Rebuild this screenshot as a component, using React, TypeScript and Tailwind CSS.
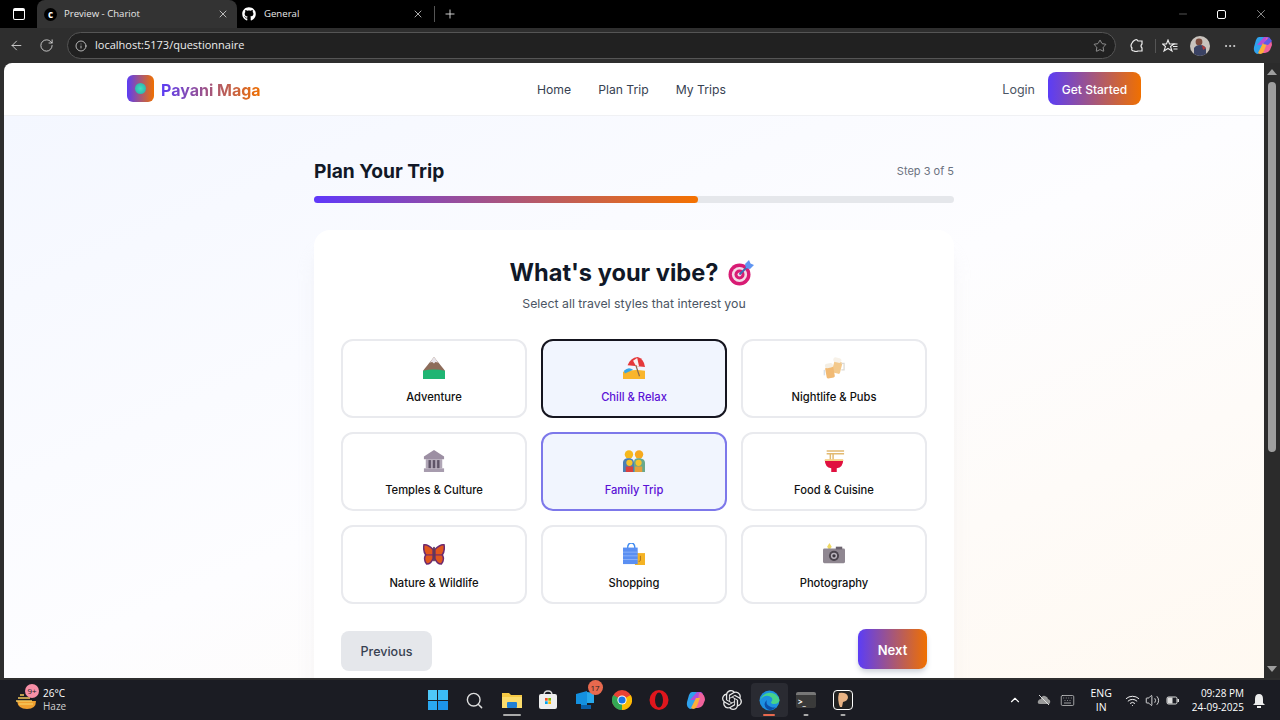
import { ArrowLeft, RotateCw, Info, Star, X, Plus, Minus, ChevronUp, Wifi, Volume2, Keyboard, Search, Ellipsis } from 'lucide-react';
import { FaGithub } from 'react-icons/fa';
import { SiOpenai } from 'react-icons/si';
import type { ReactNode } from 'react';

const Emoji = ({ children, size = 22 }: { children: ReactNode; size?: number }) => (
  <svg width={size} height={size} viewBox="0 0 24 24">{children}</svg>
);

const Mountain = () => (
  <Emoji>
    <path d="M12 0 L24 15 V18 H0 V15 Z" fill="#8d6c5a" />
    <path d="M12 0 L16.5 6 L13.5 5.5 L12 7 L10 5.5 L7.5 6 Z" fill="#e8e4ea" />
    <path d="M0 15 Q12 12 24 15 V24 H0 Z" fill="#1fb573" />
  </Emoji>
);

const Umbrella = () => (
  <Emoji>
    <path d="M0 16 Q12 13 24 15 V24 H0 Z" fill="#f9b52c" />
    <path d="M1 15 Q6 10 11 14 L2 18 Z" fill="#37a7e8" />
    <path d="M5 9 Q8 1 16 0 Q23 2 24 11 Z" fill="#e5383b" />
    <path d="M11 4 L14 9.5 L17.5 10 L15.5 1 Z" fill="#f7f2f2" />
    <path d="M14 9 L18 21" stroke="#8a6a4d" strokeWidth="1.3" />
  </Emoji>
);

const Beers = () => (
  <Emoji>
    <g opacity="0.85">
      <rect x="11" y="5" width="9" height="13" rx="1.5" fill="#f2c078" transform="rotate(14 16 11)" />
      <rect x="11" y="1" width="9" height="5" rx="2.5" fill="#f6efe4" transform="rotate(14 16 4)" />
      <path d="M20 7 h3 v7 h-3" fill="none" stroke="#d8d4cc" strokeWidth="1.4" />
      <rect x="3" y="11" width="9" height="12" rx="1.5" fill="#efae5c" transform="rotate(-10 7 16)" />
      <rect x="2" y="7" width="9" height="5" rx="2.5" fill="#f3ecdf" transform="rotate(-10 6 10)" />
      <path d="M1.5 14 v6" stroke="#cfdbe6" strokeWidth="1.6" />
    </g>
  </Emoji>
);

const Temple = () => (
  <Emoji>
    <path d="M12 0 L23 7 V10 H1 V7 Z" fill="#9c8fa3" />
    <rect x="3" y="10" width="18" height="10" fill="#b0a6b6" />
    <rect x="6" y="11" width="2.6" height="9" fill="#5f5468" />
    <rect x="10.7" y="11" width="2.6" height="9" fill="#5f5468" />
    <rect x="15.4" y="11" width="2.6" height="9" fill="#5f5468" />
    <rect x="1" y="20" width="22" height="4" fill="#a79cae" />
  </Emoji>
);

const Family = () => (
  <Emoji>
    <circle cx="6.5" cy="5" r="4.6" fill="#f6b91e" />
    <circle cx="17.5" cy="5" r="4.6" fill="#f6a91e" />
    <path d="M0 24 V13 Q1 9 5 9 H8 Q12 10 12 14 V24 Z" fill="#4a7fb5" />
    <path d="M12 24 V13 Q12 9 16 9 H19 Q24 10 24 14 V24 Z" fill="#6aa98c" />
    <circle cx="7" cy="14" r="3.4" fill="#f6c32c" />
    <circle cx="17" cy="14" r="3.4" fill="#f6c32c" />
    <rect x="3" y="18" width="8" height="6" fill="#d94040" />
    <rect x="13" y="18" width="8" height="6" fill="#e5a03c" />
  </Emoji>
);

const Noodles = () => (
  <Emoji>
    <path d="M4 1 H23 M4 4 H23 M8 5 V12 M11 5 V12" stroke="#e2b971" strokeWidth="1.6" fill="none" />
    <path d="M2 11 H22 Q22 19 15 20 V24 H9 V20 Q2 19 2 11 Z" fill="#e0103f" />
    <rect x="2" y="10" width="20" height="2" fill="#f5cf86" />
  </Emoji>
);

const Butterfly = () => (
  <Emoji>
    <path d="M11 7 Q5 1 1 2 Q0 9 3 13 Q0 18 4 23 Q9 23 11 17 Z" fill="#e2571e" stroke="#6b2a6f" strokeWidth="1.6" />
    <path d="M13 7 Q19 1 23 2 Q24 9 21 13 Q24 18 20 23 Q15 23 13 17 Z" fill="#e2571e" stroke="#6b2a6f" strokeWidth="1.6" />
    <path d="M2 13 H22" stroke="#6b2a6f" strokeWidth="1.2" />
    <rect x="11" y="4" width="2" height="16" rx="1" fill="#5c3a55" />
  </Emoji>
);

const Bags = () => (
  <Emoji>
    <path d="M5 6 Q5 0 9 0 Q13 0 13 6" fill="none" stroke="#3f8bf0" strokeWidth="1.6" />
    <rect x="13" y="11" width="11" height="13" fill="#f5b324" />
    <path d="M19 14 V19 Q19 20 17 20" stroke="#a9701d" strokeWidth="1" fill="none" />
    <rect x="0" y="5" width="16" height="18" fill="#5a8ff2" />
    <path d="M0 10 H16 M0 14 H16 M0 18 H16" stroke="#8cb2f7" strokeWidth="1" />
  </Emoji>
);

const Camera = () => (
  <Emoji>
    <path d="M7 0 L9.5 4 L7 8 L4.5 4 Z" fill="#efd964" />
    <rect x="0" y="6" width="24" height="16" rx="1.5" fill="#8f8791" />
    <rect x="14" y="4" width="7" height="3" fill="#6c646f" />
    <circle cx="12" cy="14" r="5.5" fill="#4a444d" />
    <circle cx="12" cy="14" r="3.4" fill="#b9b3bc" />
    <circle cx="12" cy="14" r="1.8" fill="#3a353d" />
  </Emoji>
);

const Target = () => (
  <svg className="mr-[4px]" width="26" height="26" viewBox="0 0 26 26">
    <circle cx="11.5" cy="14.5" r="11" fill="#d81b74" />
    <circle cx="11.5" cy="14.5" r="7.6" fill="#f4dbe7" />
    <circle cx="11.5" cy="14.5" r="5" fill="#d81b74" />
    <circle cx="11.5" cy="14.5" r="2" fill="#f4dbe7" />
    <path d="M11.5 14.5 L21 5" stroke="#3f6ab0" strokeWidth="2" />
    <path d="M17 4 L21 0 L22.5 3.5 L26 5 L22 9 L18 8 Z" fill="#5f95f2" />
  </svg>
);

const vibes = [
  { label: 'Adventure', icon: <Mountain />, state: 'none' },
  { label: 'Chill & Relax', icon: <Umbrella />, state: 'focus' },
  { label: 'Nightlife & Pubs', icon: <Beers />, state: 'none' },
  { label: 'Temples & Culture', icon: <Temple />, state: 'none' },
  { label: 'Family Trip', icon: <Family />, state: 'selected' },
  { label: 'Food & Cuisine', icon: <Noodles />, state: 'none' },
  { label: 'Nature & Wildlife', icon: <Butterfly />, state: 'none' },
  { label: 'Shopping', icon: <Bags />, state: 'none' },
  { label: 'Photography', icon: <Camera />, state: 'none' },
];

const VibeCard = ({ label, icon, state }: { label: string; icon: ReactNode; state: string }) => {
  let look = 'border-2 border-[#e9eaee] bg-white text-[#111111]';
  if (state === 'focus') look = 'border-2 border-[#15151f] bg-[#f1f5fe] text-[#5b12d6]';
  if (state === 'selected') look = 'border-2 border-[#7d78ea] bg-[#f1f5fe] text-[#5b12d6]';
  return (
    <div className={`h-[79px] rounded-xl flex flex-col items-center pt-[16px] ${look}`}>
      <div className="h-[22px] flex items-center justify-center">{icon}</div>
      <div className="mt-[9px] text-[11.2px] leading-[18px] font-medium">{label}</div>
    </div>
  );
};

const TaskIcon = ({ children, active, dot }: { children: ReactNode; active?: boolean; dot?: string }) => (
  <div className={`relative w-[36.8px] h-[34px] rounded flex items-center justify-center ${active ? 'bg-[#2a2b32]' : ''}`}>
    {children}
    {dot && <div className={`absolute bottom-[1px] left-1/2 -translate-x-1/2 h-[2px] rounded ${dot}`} />}
  </div>
);

const TabStrip = () => (
  <div className="h-[28px] flex items-end bg-black text-[#e8e8e8] text-[9.6px]">
    <div className="w-[37px] h-[28px] flex items-center justify-center">
      <div className="w-[12px] h-[12px] rounded-[2px] border border-white border-t-[3px]" />
    </div>
    <div className="w-[200px] h-[28px] bg-[#333333] rounded-t-lg flex items-center pl-[7px] pr-[8px]">
      <div className="w-[13px] h-[13px] rounded-full bg-black flex items-center justify-center text-white text-[10px] font-bold leading-none">c</div>
      <span className="ml-[7px] flex-1">Preview - Chariot</span>
      <X size={12} strokeWidth={1.5} />
    </div>
    <div className="w-[192px] h-[28px] flex items-center pl-[5px] pr-[5px]">
      <FaGithub size={14} className="text-white" />
      <span className="ml-[8px] flex-1">General</span>
      <X size={12} strokeWidth={1.5} />
    </div>
    <div className="h-[16px] w-px bg-[#555555] mb-[6px] ml-[5px]" />
    <div className="h-[28px] ml-[8px] flex items-center">
      <Plus size={14} strokeWidth={1.5} />
    </div>
    <div className="flex-1 h-[28px] flex items-center justify-end gap-[28px] pr-[12px]">
      <Minus size={12} strokeWidth={1} className="text-[#aaaaaa]" />
      <div className="w-[9px] h-[9px] border border-white rounded-[2px]" />
      <X size={14} strokeWidth={1} />
    </div>
  </div>
);

const Toolbar = () => (
  <div className="h-[35px] bg-[#2e2e2e] flex items-center text-[#e6e6e6]">
    <div className="w-[67px] pl-[9px] flex items-center gap-[15px] shrink-0">
      <ArrowLeft size={15} strokeWidth={1.3} />
      <RotateCw size={15} strokeWidth={1.3} />
    </div>
    <div className="w-[1049px] h-[27px] rounded-full bg-[#212121] border border-[#555555] flex items-center pl-[7px] pr-[8px] text-[11px]">
      <Info size={12} strokeWidth={1.5} />
      <span className="ml-[8px] flex-1 text-[#ededed]">localhost:5173/questionnaire</span>
      <Star size={14} strokeWidth={1.2} className="text-[#bbbbbb]" />
    </div>
    <div className="flex-1 flex items-center pl-[14px]">
      <svg width="14" height="14" viewBox="0 0 14 14" fill="none" stroke="#eeeeee" strokeWidth="1.2">
        <path d="M5 1 Q7 0 8 2 L12 2 L12 5 Q10 7 12 9 L12 12 L8 12 Q6 13 4 12 Q1 12 2 9 Q0 7 2 4 Q3 2 5 1 Z" />
      </svg>
      <div className="w-px h-[14px] bg-[#555555] ml-[11px]" />
      <svg className="ml-[6px]" width="16" height="14" viewBox="0 0 16 14" fill="none" stroke="#eeeeee" strokeWidth="1.1">
        <path d="M6 1 L7.5 5 H12 L8.5 7.5 L10 12 L6 9.5 L2 12 L3.5 7.5 L0.5 5 H4.5 Z" />
        <path d="M11 7.5 H15.5 M11.5 10 H15.5 M10.5 5 H15.5" />
      </svg>
      <div className="ml-[12px] w-[20px] h-[20px] rounded-full bg-[#c9c3bd] overflow-hidden flex justify-center items-end">
        <svg width="14" height="19" viewBox="0 0 14 19">
          <circle cx="6" cy="5" r="3.4" fill="#7a4a3c" />
          <path d="M1 19 V11 Q3 8 7 8 Q12 8 13 12 V19 Z" fill="#3a4263" />
          <path d="M9 8 L13 11 L10 13 Z" fill="#b23a3a" />
        </svg>
      </div>
      <Ellipsis size={14} strokeWidth={1.5} className="ml-[13px]" />
      <svg className="ml-[16px]" width="20" height="19" viewBox="0 0 20 19">
        <path d="M6 1 H11 L8 16 Q7 18 4 18 Q0 16 1 11 L3 4 Q4 1 6 1 Z" fill="#2fa2ee" />
        <path d="M4 9 L11 1 H15 Q18 3 17 6 L14 9 Z" fill="#b14fd8" />
        <path d="M13 2 H15 Q19 4 19 9 L17 14 Q15 17 12 17 H8 L12 9 Z" fill="#f0629c" />
        <path d="M5 17 L10 7 L14 7 L11 15 Q10 18 7 18 Z" fill="#fbb03a" />
        <path d="M10 8 L16 1 L19 5 L15 9 Z" fill="#5d5be6" />
      </svg>
    </div>
  </div>
);

const Navbar = () => (
  <div className="h-[53px] shrink-0 bg-white border-b border-[#f0f1f4] flex justify-center" >
    <div className="w-[1014px] flex items-center">
      <div className="w-[27px] h-[27px] rounded-md bg-linear-to-r/srgb from-[#5b3df6] to-[#f07000] flex items-center justify-center mb-[1px]">
        <div className="w-[11px] h-[11px] rounded-full bg-[radial-gradient(circle,#3fe0c0,#2aa6a8)]" />
      </div>
      <div className="ml-[7px] w-[376px] text-[16px] font-bold pt-[2px]">
        <span className="bg-linear-to-r/srgb from-[#5b3df6] to-[#f07000] bg-clip-text text-transparent">Payani Maga</span>
      </div>
      <div className="flex items-center gap-[27px] text-[12.2px] text-[#374151] pt-[2px]">
        <span>Home</span>
        <span>Plan Trip</span>
        <span>My Trips</span>
      </div>
      <div className="flex-1 flex items-center justify-end text-[12.5px]">
        <span className="text-[#4b5563] pt-[2px]">Login</span>
        <div className="ml-[13px] mb-[2px] pt-[3px] w-[93px] h-[33px] rounded-lg bg-linear-to-r/srgb from-[#5b3df6] to-[#f07000] text-white font-medium flex items-center justify-center text-[12px]">
          Get Started
        </div>
      </div>
    </div>
  </div>
);

const Page = () => (
  <div className="flex-1 bg-linear-to-br from-[#f4f7ff] via-[#fdfdff] to-[#fff9f1] flex flex-col items-center overflow-hidden">
    <div className="w-[640px] shrink-0">
      <div className="mt-[41px] h-[28px] flex items-center justify-between">
        <h2 className="text-[19.2px] font-bold text-[#111827]">Plan Your Trip</h2>
        <span className="text-[11px] text-[#6b7280]">Step 3 of 5</span>
      </div>
      <div className="mt-[11px] h-[7px] rounded-full bg-[#e5e7eb]">
        <div className="h-[7px] w-[60%] rounded-full bg-linear-to-r/srgb from-[#5f38fb] to-[#f57200]" />
      </div>
      <div className="mt-[27px] h-[560px] bg-white rounded-2xl shadow-xl shadow-gray-200/40 px-[27px]">
        <div className="pt-[26px] flex justify-center items-center gap-[10px] h-[60px]">
          <h1 className="text-[23.6px] font-bold text-[#111827]">What's your vibe?</h1>
          <Target />
        </div>
        <p className="mt-[4px] text-center text-[12.3px] leading-[20px] text-[#4b5563]">Select all travel styles that interest you</p>
        <div className="mt-[25px] grid grid-cols-3 gap-x-[14px] gap-y-[14px]">
          {vibes.map((v) => <VibeCard key={v.label} {...v} />)}
        </div>
        <div className="mt-[25px] flex justify-between items-start">
          <div className="mt-[2px] pt-[2px] w-[91px] h-[40px] rounded-lg bg-[#e5e7eb] text-[#374151] text-[12.5px] font-medium flex items-center justify-center">Previous</div>
          <div className="pt-[3px] w-[69px] h-[40px] rounded-lg bg-linear-to-r/srgb from-[#5b3df6] to-[#f07000] text-white text-[13px] font-semibold flex items-center justify-center shadow-md shadow-gray-300">Next</div>
        </div>
      </div>
    </div>
  </div>
);

const Scrollbar = () => (
  <div className="w-[16px] shrink-0 bg-[#2b2b2b] flex flex-col items-center pt-[6px]">
    <div className="w-0 h-0 border-x-[5px] border-x-transparent border-b-[6px] border-b-[#9e9e9e]" />
    <div className="mt-[7px] w-[8px] h-[370px] rounded-full bg-[#9e9e9e]" />
    <div className="mt-auto mb-[6px] w-0 h-0 border-x-[5px] border-x-transparent border-t-[6px] border-t-[#9e9e9e]" />
  </div>
);

const Taskbar = () => (
  <div className="h-[40px] bg-[#1b1c23] flex items-center text-white text-[10px]">
    <div className="w-[419.6px] shrink-0 flex items-center pl-[16px]">
      <div className="relative w-[22px] h-[22px]">
        <svg width="22" height="22" viewBox="0 0 22 22">
          <path d="M1 12 H20 Q20 20 11 20 Q2 20 1 12 Z" fill="#f0a030" />
          <path d="M2 9 H14 M0 12 H16 M3 15 H17 M4 6 H8" stroke="#f4c65a" strokeWidth="1.5" />
        </svg>
        <div className="absolute -top-[5px] left-[9px] w-[14px] h-[14px] rounded-full bg-[#f78fa7] text-[#222222] text-[8px] leading-[14px] text-center">9+</div>
      </div>
      <div className="ml-[5px] leading-[13px]">
        <div>26°C</div>
        <div className="text-[#cfcfcf]">Haze</div>
      </div>
    </div>
    <div className="flex items-center">
      <TaskIcon>
        <div className="grid grid-cols-2 gap-[1px] w-[20px] h-[20px]">
          <div className="bg-[#4fc8f8]" />
          <div className="bg-[#3cbcf6]" />
          <div className="bg-[#2aa8f0]" />
          <div className="bg-[#1c94ea]" />
        </div>
      </TaskIcon>
      <TaskIcon><Search size={19} strokeWidth={1.8} className="text-[#dddddd]" /></TaskIcon>
      <TaskIcon dot="w-[18px] bg-[#aaaaaa]">
        <svg width="20" height="20" viewBox="0 0 20 20">
          <path d="M0 3 H7 L9 5 H20 V18 H0 Z" fill="#f6c945" />
          <path d="M0 7 H20 V18 H0 Z" fill="#fbdc6c" />
          <rect x="5" y="12" width="10" height="6" rx="1" fill="#1f7fd4" />
        </svg>
      </TaskIcon>
      <TaskIcon>
        <svg width="20" height="20" viewBox="0 0 20 20">
          <path d="M6 5 Q6 1 10 1 Q14 1 14 5" fill="none" stroke="#dddddd" strokeWidth="1.3" />
          <rect x="1" y="4" width="18" height="15" rx="2" fill="#eeeeee" />
          <rect x="7" y="8" width="2.7" height="2.7" fill="#f05022" />
          <rect x="10.3" y="8" width="2.7" height="2.7" fill="#7fba00" />
          <rect x="7" y="11.3" width="2.7" height="2.7" fill="#00a4ef" />
          <rect x="10.3" y="11.3" width="2.7" height="2.7" fill="#ffb900" />
        </svg>
      </TaskIcon>
      <TaskIcon>
        <svg width="20" height="20" viewBox="0 0 20 20">
          <path d="M1 4 L12 1 V16 H6 V14 H1 Z" fill="#1490df" />
          <path d="M12 2 L19 3 V13 H12 Z" fill="#28a8ea" />
          <rect x="6" y="15" width="10" height="4" fill="#0a5fa8" />
        </svg>
        <div className="absolute top-[-3px] right-[1px] w-[15px] h-[15px] rounded-full bg-[#e8694e] text-[#222222] text-[8px] leading-[15px] text-center">17</div>
      </TaskIcon>
      <TaskIcon>
        <svg width="20" height="20" viewBox="0 0 20 20">
          <circle cx="10" cy="10" r="10" fill="#e94235" />
          <path d="M10 10 L1.3 5 A10 10 0 0 0 10 20 Z" fill="#34a853" />
          <path d="M10 10 L10 20 A10 10 0 0 0 18.7 5 Z" fill="#fbbc04" />
          <circle cx="10" cy="10" r="4.6" fill="#ffffff" />
          <circle cx="10" cy="10" r="3.6" fill="#1a73e8" />
        </svg>
      </TaskIcon>
      <TaskIcon>
        <svg width="20" height="20" viewBox="0 0 20 20">
          <ellipse cx="10" cy="10" rx="9.5" ry="10" fill="#e0161d" />
          <ellipse cx="10" cy="10" rx="4" ry="7.5" fill="#1b1c23" />
        </svg>
      </TaskIcon>
      <TaskIcon>
        <svg width="20" height="19" viewBox="0 0 20 19">
          <path d="M6 1 H11 L8 16 Q7 18 4 18 Q0 16 1 11 L3 4 Q4 1 6 1 Z" fill="#2fa2ee" />
          <path d="M4 9 L11 1 H15 Q18 3 17 6 L14 9 Z" fill="#b14fd8" />
          <path d="M13 2 H15 Q19 4 19 9 L17 14 Q15 17 12 17 H8 L12 9 Z" fill="#f0629c" />
          <path d="M5 17 L10 7 L14 7 L11 15 Q10 18 7 18 Z" fill="#fbb03a" />
        </svg>
      </TaskIcon>
      <TaskIcon><SiOpenai size={20} className="text-[#e8e8e8]" /></TaskIcon>
      <TaskIcon active dot="w-[12px] bg-[#e8694e]">
        <svg width="21" height="21" viewBox="0 0 21 21">
          <circle cx="10.5" cy="10.5" r="10" fill="#1d8fe0" />
          <path d="M1 11 A10 10 0 0 1 20.5 10 Q20 14 15 14 Q12 14 12 12 Q14 11 13 8 Q9 4 4 7 Q2 8 1 11 Z" fill="#46d38b" />
          <path d="M8 19 Q3 14 8 10 Q6 15 12 17 Q15 18 17 17 Q13 22 8 19 Z" fill="#0b4fa8" />
        </svg>
      </TaskIcon>
      <TaskIcon dot="w-[5px] bg-[#aaaaaa]">
        <div className="w-[20px] h-[16px] rounded-[2px] bg-[#3a3a3a] border-t-[3px] border-[#777777] flex items-center pl-[2px] text-[8px] font-bold leading-none">&gt;_</div>
      </TaskIcon>
      <TaskIcon dot="w-[5px] bg-[#aaaaaa]">
        <div className="w-[20px] h-[20px] rounded-[4px] bg-[#222222] border border-white flex items-center justify-center">
          <svg width="12" height="16" viewBox="0 0 12 16">
            <path d="M2 1 Q10 0 11 5 Q11 9 6 10 L5 15 H3 Q0 8 2 1 Z" fill="#e9b384" />
          </svg>
        </div>
      </TaskIcon>
    </div>
    <div className="flex-1 flex items-center justify-end pr-[14px]">
      <ChevronUp size={14} strokeWidth={2} />
      <svg className="ml-[15px]" width="14" height="12" viewBox="0 0 14 12">
        <path d="M3 10 Q0 10 1 7 Q2 5 4 5 Q5 1 8 2 Q11 3 11 5 Q14 6 13 9 Q13 10 11 10 Z" fill="#9a9a9a" />
        <path d="M2 1 L12 11" stroke="#dddddd" strokeWidth="1" />
      </svg>
      <Keyboard size={15} strokeWidth={1.2} className="ml-[9px] text-[#cccccc]" />
      <div className="ml-[15px] text-center text-[10.5px] leading-[14px]"><div>ENG</div><div>IN</div></div>
      <Wifi size={15} strokeWidth={1.5} className="ml-[13px]" />
      <Volume2 size={15} strokeWidth={1.3} className="ml-[5px]" />
      <svg className="ml-[6px]" width="14" height="11" viewBox="0 0 14 11">
        <rect x="1" y="2" width="10" height="7" rx="1.5" fill="none" stroke="#dddddd" strokeWidth="1" />
        <rect x="1.5" y="2.5" width="5" height="6" fill="#dddddd" />
        <rect x="11.5" y="4" width="1.5" height="3" fill="#dddddd" />
      </svg>
      <div className="ml-[12px] text-right text-[10px] leading-[14px]">
        <div>09:28 PM</div>
        <div>24-09-2025</div>
      </div>
      <svg className="ml-[8px]" width="14" height="15" viewBox="0 0 14 15">
        <path d="M7 1 Q11 1 11 6 V10 L13 12 H1 L3 10 V6 Q3 1 7 1 Z" fill="#ececec" />
        <rect x="5" y="13" width="4" height="2" fill="#ececec" />
      </svg>
    </div>
  </div>
);

const App = () => {
  return (
    <div className="w-[1280px] h-[720px] flex flex-col overflow-hidden bg-[#2e2e2e] font-['Inter',sans-serif]">
      <div className="font-['Open_Sans',sans-serif]">
        <TabStrip />
        <Toolbar />
      </div>
      <div className="flex-1 min-h-0 flex pl-[4px] pb-[2px]">
        <div className="flex-1 min-w-0 flex flex-col rounded-tl-lg overflow-hidden">
          <Navbar />
          <Page />
        </div>
        <Scrollbar />
      </div>
      <div className="font-['Open_Sans',sans-serif]">
        <Taskbar />
      </div>
    </div>
  );
};

export default App;
